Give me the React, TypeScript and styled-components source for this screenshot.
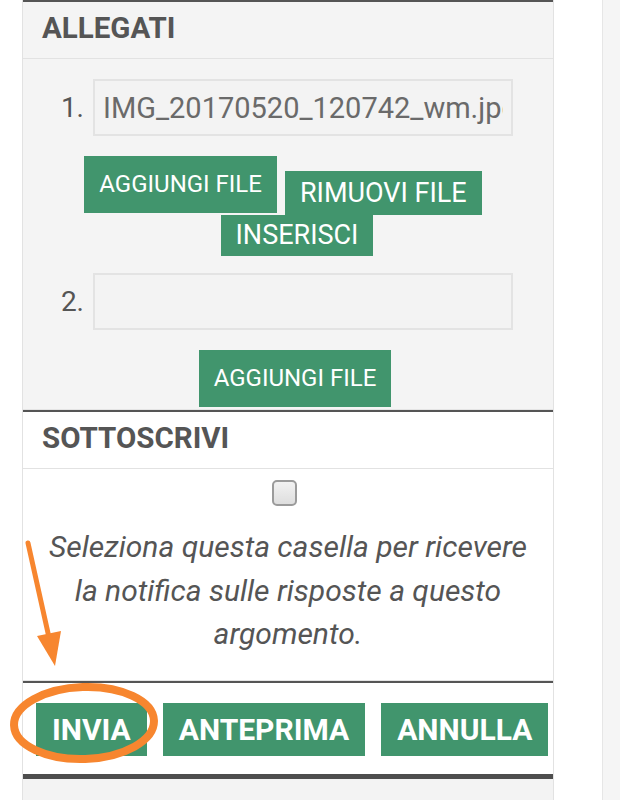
import React from "react";
import styled, { createGlobalStyle } from "styled-components";

const Global = createGlobalStyle`
  html, body { margin: 0; padding: 0; background: #ffffff; }
  body { font-family: Roboto, "Noto Sans", Arial, sans-serif; color: #555; }
  * { box-sizing: border-box; }
`;

const Page = styled.div`
  position: relative;
  display: flex;
  min-height: 800px;
  width: 620px;
  overflow: hidden;
`;

const Gutter = styled.div`
  width: 22px;
  flex: none;
  background: #fff;
`;

const Panel = styled.div`
  width: 532px;
  flex: none;
  border-left: 1px solid #e2e2e2;
  border-right: 1px solid #e2e2e2;
  background: #f3f3f3;
  display: flex;
  flex-direction: column;
`;

const Spacer = styled.div`
  width: 48px;
  flex: none;
  background: #fff;
`;

const RightPane = styled.div`
  flex: 1;
  border-left: 1px solid #e6e6e6;
  background: #f5f5f5;
`;

const Section = styled.section<{ $bg: string }>`
  background: ${(p) => p.$bg};
  border-top: 2px solid #555;
`;

const Header = styled.div`
  height: 57px;
  padding: 0 0 3px 19px;
  line-height: 53px;
  font-family: Roboto, Arial, sans-serif;
  font-weight: 700;
  font-size: 29.5px;
  color: #555;
  border-bottom: 1px solid #e2e2e2;
`;

const Body = styled.div<{ $pt: number; $pb: number }>`
  padding: ${(p) => p.$pt}px 0 ${(p) => p.$pb}px 0;
  border-bottom: 1px solid #e4e4e4;
  display: flex;
  flex-direction: column;
`;

const FileRow = styled.div<{ $mt: number }>`
  display: flex;
  align-items: center;
  gap: 9px;
  margin-top: ${(p) => p.$mt}px;
`;

const Num = styled.span`
  width: 61px;
  text-align: right;
  font-size: 28px;
  color: #555;
`;

const FileInput = styled.input`
  width: 420px;
  height: 57px;
  border: 2px solid #e3e3e3;
  background: #f3f3f3;
  padding: 0 8px;
  font-family: Roboto, Arial, sans-serif;
  font-size: 29px;
  color: #6a6a6a;
  outline: none;
`;

const ButtonGroup = styled.div<{ $w: number; $ml: number; $mt: number }>`
  display: flex;
  flex-wrap: wrap;
  justify-content: center;
  align-items: flex-start;
  column-gap: 8px;
  width: ${(p) => p.$w}px;
  margin: ${(p) => p.$mt}px 0 0 ${(p) => p.$ml}px;
`;

const FileButton = styled.button<{ $h: number; $fs: number; $mt?: number; $ml?: number }>`
  height: ${(p) => p.$h}px;
  line-height: ${(p) => p.$h}px;
  font-size: ${(p) => p.$fs}px;
  margin-top: ${(p) => p.$mt ?? 0}px;
  margin-left: ${(p) => p.$ml ?? 0}px;
  padding: 0 15px;
  border: none;
  background: #41956d;
  color: #fff;
  font-family: Roboto, Arial, sans-serif;
  font-weight: 400;
  white-space: nowrap;
`;

const Check = styled.input`
  appearance: none;
  -webkit-appearance: none;
  width: 25px;
  height: 26px;
  margin: 0 auto;
  position: relative;
  left: -4px;
  display: block;
  border: 2px solid #9b9b9b;
  border-radius: 5px;
  background: linear-gradient(#f2f2f2, #dedede);
`;

const Note = styled.p`
  margin: 19px 0 0 0;
  padding: 0 20px;
  text-align: center;
  font-family: Roboto, Arial, sans-serif;
  font-style: italic;
  font-size: 30px;
  line-height: 43.5px;
  color: #555;
`;

const Footer = styled.div`
  background: #fff;
  border-top: 2px solid #555;
  border-bottom: 5px solid #4e4e4e;
  display: flex;
  gap: 16px;
  padding: 20px 0 18px 13px;
`;

const ActionButton = styled.button`
  height: 53px;
  padding: 0 16px;
  border: none;
  background: #41956d;
  color: #fff;
  font-family: Roboto, Arial, sans-serif;
  font-weight: 700;
  font-size: 30px;
  white-space: nowrap;
`;

const Rest = styled.div`
  flex: 1;
  background: #f3f3f3;
`;

const Annotation = styled.svg`
  position: absolute;
  left: 0;
  top: 0;
  pointer-events: none;
`;

export default function App() {
  return (
    <>
      <Global />
      <Page>
        <Gutter />
        <Panel>
          <Section $bg="#f4f4f4">
            <Header>ALLEGATI</Header>
            <Body $pt={20} $pb={2}>
              <FileRow $mt={0}>
                <Num>1.</Num>
                <FileInput readOnly value="IMG_20170520_120742_wm.jpg" />
              </FileRow>
              <ButtonGroup $w={400} $ml={60} $mt={20}>
                <FileButton $h={57} $fs={24}>AGGIUNGI FILE</FileButton>
                <FileButton $h={44} $fs={27} $mt={15}>RIMUOVI FILE</FileButton>
                <FileButton $h={41} $fs={27} $ml={28}>INSERISCI</FileButton>
              </ButtonGroup>
              <FileRow $mt={17}>
                <Num>2.</Num>
                <FileInput readOnly value="" />
              </FileRow>
              <ButtonGroup $w={400} $ml={72} $mt={20}>
                <FileButton $h={57} $fs={24}>AGGIUNGI FILE</FileButton>
              </ButtonGroup>
            </Body>
          </Section>
          <Section $bg="#ffffff">
            <Header>SOTTOSCRIVI</Header>
            <Body $pt={11} $pb={24}>
              <Check type="checkbox" />
              <Note>
                Seleziona questa casella per ricevere la notifica sulle risposte a questo argomento.
              </Note>
            </Body>
          </Section>
          <Footer>
            <ActionButton>INVIA</ActionButton>
            <ActionButton>ANTEPRIMA</ActionButton>
            <ActionButton>ANNULLA</ActionButton>
          </Footer>
          <Rest />
        </Panel>
        <Spacer />
        <RightPane />
        <Annotation width="620" height="800" viewBox="0 0 620 800">
          <line x1="28" y1="543" x2="50" y2="642" stroke="#f7862f" strokeWidth="5" strokeLinecap="round" />
          <polygon points="37,636 61,631 55,666" fill="#f7862f" />
          <ellipse cx="84" cy="723" rx="70" ry="36" fill="none" stroke="#f7862f" strokeWidth="8" transform="rotate(-2 84 723)" />
        </Annotation>
      </Page>
    </>
  );
}
